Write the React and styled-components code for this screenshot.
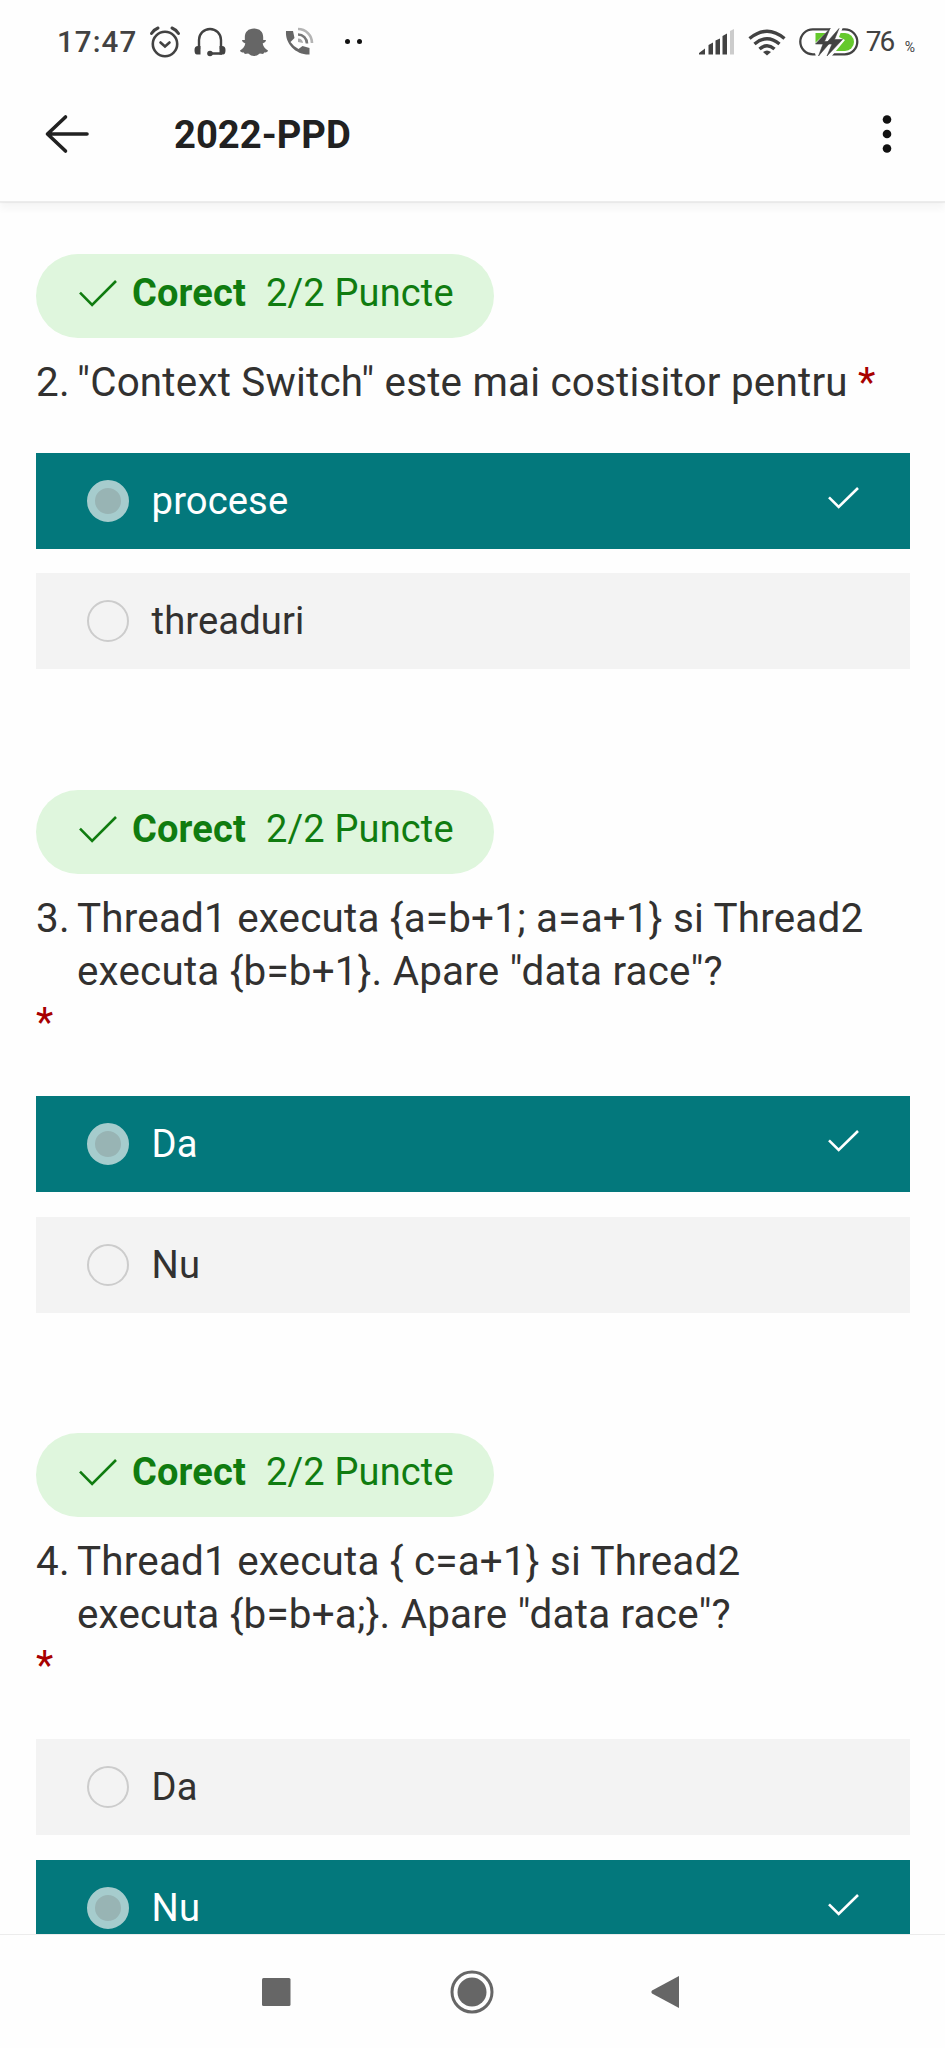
import React from "react";
import styled, { createGlobalStyle } from "styled-components";

const Global = createGlobalStyle`
  * { box-sizing: border-box; }
  body { margin: 0; background: #fefefe; }
`;

const Screen = styled.div`
  width: 945px;
  height: 2048px;
  display: flex;
  flex-direction: column;
  overflow: hidden;
  background: #fefefe;
  font-family: Roboto, sans-serif;
  color: #323130;
`;

const StatusBar = styled.div`
  height: 84px;
  flex: none;
  display: flex;
  align-items: center;
  justify-content: space-between;
  padding: 0 30px 0 57px;
  color: #424242;
`;

const StatusGroup = styled.div`
  display: flex;
  align-items: center;
`;

const Clock = styled.span`
  width: 93px;
  font-size: 29.5px;
  font-weight: 500;
  line-height: 36px;
  letter-spacing: 1.1px;
  white-space: nowrap;
`;

const Percent = styled.span`
  font-size: 28px;
  line-height: 36px;
  letter-spacing: -2px;
  width: 39px;
  white-space: nowrap;
`;

const PercentSign = styled.span`
  font-size: 14px;
  line-height: 20px;
  padding-top: 9px;
`;

const Glyph = styled.svg`
  display: block;
  flex: none;
  overflow: visible;
  margin-left: ${(p) => p.$gap || 0}px;
`;

const AppBar = styled.header`
  position: relative;
  z-index: 1;
  height: 118px;
  flex: none;
  display: flex;
  align-items: center;
  padding: 0 41px 17px 45px;
  background: #fefefe;
  border-bottom: 1px solid #ececec;
  box-shadow: 0 1px 1px rgba(0, 0, 0, 0.05), 0 7px 7px rgba(0, 0, 0, 0.035);
`;

const Title = styled.h1`
  margin: 2px 0 0 85px;
  flex: 1;
  font-size: 38.2px;
  line-height: 46px;
  font-weight: 700;
  color: #212121;
`;

const Content = styled.main`
  flex: 1;
  min-height: 0;
  overflow: hidden;
  padding: 52px 35px 0 36px;
`;

const Question = styled.section`
  height: ${(p) => p.$height}px;
`;

const Pill = styled.div`
  width: 458px;
  height: 84px;
  border-radius: 42px;
  background: #dff6dd;
  color: #107c10;
  display: flex;
  align-items: center;
  padding: 0 0 6px 43px;
  font-size: 38px;
  line-height: 50px;
  letter-spacing: 0.15px;
  white-space: nowrap;
`;

const Verdict = styled.strong`
  margin-left: 15px;
  width: 134px;
  font-weight: 700;
`;

const Prompt = styled.div`
  margin-top: 18px;
  height: ${(p) => p.$height}px;
  display: flex;
  font-size: 40.4px;
  line-height: 53px;
  letter-spacing: 0.2px;
  white-space: nowrap;
`;

const Num = styled.span`
  width: 41px;
  flex: none;
`;

const Required = styled.span`
  color: #a80000;
`;

const RequiredLine = styled.div`
  height: 97px;
  padding-top: 1px;
  font-size: 40px;
  line-height: 46px;
  color: #a80000;
`;

const Option = styled.div`
  height: 96px;
  margin-bottom: 24.5px;
  display: flex;
  align-items: center;
  padding: 0 51px;
  background: ${(p) => (p.$selected ? "#03787c" : "#f3f3f3")};
  color: ${(p) => (p.$selected ? "#ffffff" : "#323130")};
  font-size: 38.2px;
  line-height: 50px;
  letter-spacing: 0.1px;
`;

const OptionText = styled.span`
  flex: 1;
  margin-left: 22.6px;
`;

const Radio = styled.span`
  width: 42px;
  height: 42px;
  border-radius: 50%;
  border: ${(p) => (p.$selected ? "8px solid #a6cccd" : "2px solid #cccccc")};
  background: ${(p) => (p.$selected ? "#98b4b4" : "transparent")};
`;

const NavBar = styled.nav`
  height: 114px;
  flex: none;
  display: flex;
  align-items: center;
  border-top: 1px solid #ececec;
  padding-left: 262px;
  background: #fefefe;
`;

const Check = ({ width, height, color, stroke, lift = 0 }) => (
  <Glyph width={width} height={height} viewBox={`0 ${lift} ${width} ${height}`} fill="none" stroke={color} strokeWidth={stroke}>
    <path d={`M1 ${height * 0.47}L${width * 0.345} ${height - 2}L${width - 1} 1`} />
  </Glyph>
);

const Choice = ({ text, selected }) => (
  <Option $selected={selected}>
    <Radio $selected={selected} />
    <OptionText>{text}</OptionText>
    {selected && <Check width={31} height={22} color="#fff" stroke={2.6} lift={3} />}
  </Option>
);

const questions = [
  { n: 2, height: 536, lines: ['"Context Switch" este mai costisitor pentru '], inline: true, options: ["procese", "threaduri"], answer: 0 },
  { n: 3, height: 643, lines: ["Thread1 executa {a=b+1; a=a+1} si Thread2", 'executa {b=b+1}. Apare "data race"?'], options: ["Da", "Nu"], answer: 0 },
  { n: 4, height: 642, lines: ["Thread1 executa { c=a+1} si Thread2", 'executa {b=b+a;}. Apare "data race"?'], options: ["Da", "Nu"], answer: 1 },
];

export default function App() {
  return (
    <Screen>
      <Global />
      <StatusBar>
        <StatusGroup>
          <Clock>17:47</Clock>
          <Glyph width="30" height="32" viewBox="0 0 30 32" fill="none" stroke="#424242" strokeWidth="2.6" strokeLinecap="round">
            <circle cx="15" cy="18" r="12.2" />
            <path d="M10.5 16.5L15 20.5L19.5 16.5" />
            <path d="M1.5 7.5Q4 3.5 8 2M28.500 7.5Q26 3.500 22 2" strokeWidth="3" />
          </Glyph>
          <Glyph $gap={14} width="32" height="30" viewBox="0 0 32 30" fill="none" stroke="#424242" strokeWidth="2.4">
            <path d="M5 22V13A11 11 0 0 1 27 13V22M16 26.500H28" />
            <path d="M6.500 19H4Q0.500 19 0.500 23Q0.500 27.500 3 27.500H6.500ZM25.500 19H28Q31.500 19 31.500 23Q31.500 27.500 29 27.500H25.500Z" fill="#424242" stroke="none" />
            <circle cx="16" cy="26.500" r="2.800" fill="#424242" stroke="none" />
          </Glyph>
          <Glyph $gap={14} width="28" height="28" viewBox="0.500 0 29 28" preserveAspectRatio="none" fill="#666">
            <path d="M15 0.500C9 0.500 5.500 4 5.500 9V12L2.500 12Q2.500 14 6 15.500C5.500 19 3 21 0.500 22.500Q1 24.500 4.500 24.500L5.500 26L9 25.500Q12 28 15 28Q18 28 21 25.500L24.500 26L25.500 24.500Q29 24.500 29.500 22.500C27 21 24.500 19 24 15.500Q27.500 14 27.500 12L24.500 12V9C24.500 4 21 0.500 15 0.500Z" />
          </Glyph>
          <Glyph $gap={17} width="28" height="32" viewBox="0 0 28 32" fill="none">
            <path d="M1 5H8L9.500 12L5.500 16Q9 21 13.500 23L17.500 20L24.500 22V28.500C11 29 0 18 1 5Z" fill="#666" />
            <path d="M13 8.500A9 9 0 0 1 22 17.500" stroke="#777" strokeWidth="2.600" />
            <path d="M13 3A14 14 0 0 1 27 17" stroke="#b4b4b4" strokeWidth="2.600" />
            <path d="M13 12.500A5 5 0 0 1 18 17L13 16Z" fill="#aaa" />
          </Glyph>
          <Glyph $gap={32} width="18" height="6" viewBox="0 0 18 6" fill="#111">
            <circle cx="2.500" cy="2.500" r="2.500" />
            <circle cx="14.500" cy="2.500" r="2.500" />
          </Glyph>
        </StatusGroup>
        <StatusGroup>
          <Glyph width="36" height="26" viewBox="0 0 36 26" fill="#424242">
            <path d="M0 25.500V24L6 19.500V25.500ZM9.500 25.500V16L14 13.500V25.500ZM16.500 25.500V11.500L21 9.500V25.500ZM23.500 25.500V7L28 4.500V25.500Z" />
            <path d="M31 25.500V2L35 0V25.500Z" fill="#ccc" />
          </Glyph>
          <Glyph $gap={13} width="38" height="27" viewBox="0 0 38 27" fill="none" stroke="#424242" strokeWidth="3.400">
            <path d="M1.500 9.500Q19 -5 36.500 9.500" />
            <path d="M6.500 15Q19 4.500 31.500 15" />
            <path d="M11.500 20Q19 13.500 26.500 20" />
            <path d="M15 23Q19 20 23 23L19 26.500Z" fill="#424242" stroke="none" />
          </Glyph>
          <Glyph $gap={13} width="60" height="28" viewBox="0 0 60 28" fill="none">
            <rect x="1.300" y="1.300" width="57" height="25" rx="12.500" stroke="#424242" strokeWidth="2.300" />
            <path d="M16.500 5H46A9 9 0 0 1 46 23H16.500Z" fill="#65c92c" />
            <path d="M33 -1L14 17L17 29H32L46 12L40 9L44 -1Z" fill="#fefefe" />
            <path d="M31 0.500L16.500 16H24L19.500 28L32 13.500H25.500ZM40 0.500L26.500 16H33L28 28L43.500 11.500H35.500Z" fill="#424242" stroke="#424242" strokeWidth="0.600" />
          </Glyph>
          <Glyph width="7" height="2" />
          <Percent>76</Percent>
          <PercentSign>%</PercentSign>
        </StatusGroup>
      </StatusBar>
      <AppBar>
        <Glyph width="44" height="38" viewBox="0 0 44 38" fill="none" stroke="#212121" strokeWidth="3.600" strokeLinecap="round" strokeLinejoin="round">
          <path d="M20.500 2L2.500 19L20.500 36M2.500 19H42" />
        </Glyph>
        <Title>2022-PPD</Title>
        <Glyph width="36" height="38" viewBox="0 0 36 38" fill="#111">
          <circle cx="19" cy="4.500" r="4.300" />
          <circle cx="19" cy="19" r="4.300" />
          <circle cx="19" cy="33.500" r="4.300" />
        </Glyph>
      </AppBar>
      <Content>
        {questions.map((q) => (
          <Question key={q.n} $height={q.height}>
            <Pill>
              <Check width={38} height={27} color="#107c10" stroke={2.6} />
              <Verdict>Corect</Verdict>
              <span>2/2 Puncte</span>
            </Pill>
            <Prompt $height={q.inline ? 96.8 : 107}>
              <Num>{q.n}.</Num>
              <div>
                {q.lines.map((line) => (
                  <div key={line}>
                    {line}
                    {q.inline && <Required>*</Required>}
                  </div>
                ))}
              </div>
            </Prompt>
            {!q.inline && <RequiredLine>*</RequiredLine>}
            {q.options.map((text, i) => (
              <Choice key={text} text={text} selected={i === q.answer} />
            ))}
          </Question>
        ))}
      </Content>
      <NavBar>
        <Glyph width="29" height="28" viewBox="0 0 29 28" fill="#666">
          <rect width="28.500" height="28" rx="1.500" />
        </Glyph>
        <Glyph $gap={159} width="44" height="44" viewBox="0 0 44 44" fill="none" stroke="#666">
          <circle cx="22" cy="22" r="20" strokeWidth="3" />
          <circle cx="22" cy="22" r="14.500" fill="#666" stroke="none" />
        </Glyph>
        <Glyph $gap={157} width="28" height="32" viewBox="0 0 28 32" fill="#666">
          <path d="M28 0V32L1 17.500Q-0.500 16 1 14.500Z" />
        </Glyph>
      </NavBar>
    </Screen>
  );
}
